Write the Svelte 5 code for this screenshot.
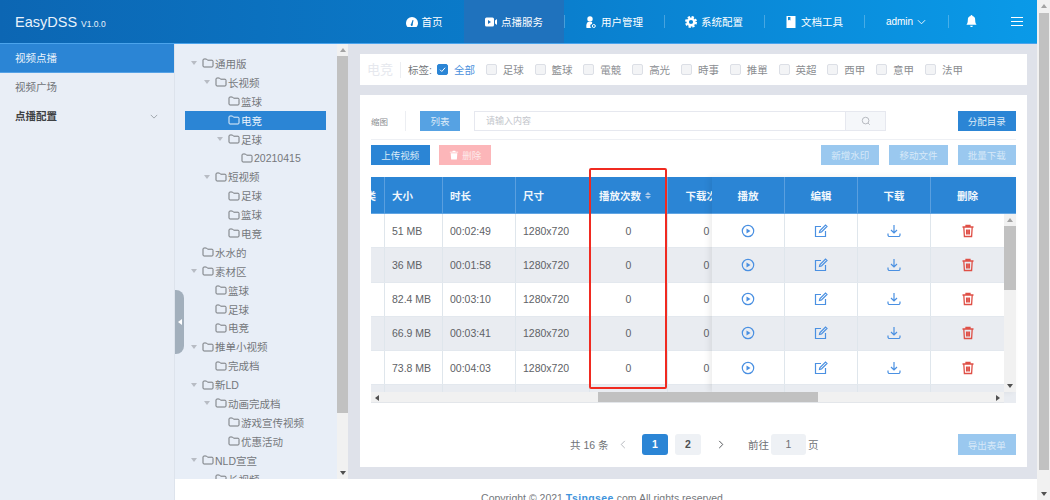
<script lang="ts">
  const nav = [
    { label: '首页', icon: 'home', home: true },
    { label: '点播服务', icon: 'video', active: true },
    { label: '用户管理', icon: 'user', split: true },
    { label: '系统配置', icon: 'gear', split: true },
    { label: '文档工具', icon: 'doc', split: true }
  ];

  const tags = ['足球', '籃球', '電競', '高光', '時事', '推單', '英超', '西甲', '意甲', '法甲'];

  const tree = [
    { name: '通用版', level: 0, open: true },
    { name: '长视频', level: 1, open: true },
    { name: '篮球', level: 2 },
    { name: '电竞', level: 2, selected: true },
    { name: '足球', level: 2, open: true },
    { name: '20210415', level: 3 },
    { name: '短视频', level: 1, open: true },
    { name: '足球', level: 2 },
    { name: '篮球', level: 2 },
    { name: '电竞', level: 2 },
    { name: '水水的', level: 0 },
    { name: '素材区', level: 0, open: true },
    { name: '篮球', level: 1 },
    { name: '足球', level: 1 },
    { name: '电竞', level: 1 },
    { name: '推单小视频', level: 0, open: true },
    { name: '完成档', level: 1 },
    { name: '新LD', level: 0, open: true },
    { name: '动画完成档', level: 1, open: true },
    { name: '游戏宣传视频', level: 2 },
    { name: '优惠活动', level: 2 },
    { name: 'NLD宣宣', level: 0, open: true },
    { name: '长视频', level: 1 }
  ];

  const rows = [
    { size: '51 MB', time: '00:02:49' },
    { size: '36 MB', time: '00:01:58' },
    { size: '82.4 MB', time: '00:03:10' },
    { size: '66.9 MB', time: '00:03:41' },
    { size: '73.8 MB', time: '00:04:03' },
    { size: '', time: '' }
  ];
</script>

<div class="page">
  <div class="shell">
    <header class="topbar">
      <div class="brand">EasyDSS <small>V1.0.0</small></div>
      <nav class="nav">
        {#each nav as item}
          <div class="nav-item" class:active={item.active} class:split={item.split} class:home={item.home}>
            <svg class="nav-icon" viewBox="0 0 12 12" aria-hidden="true">
              {#if item.icon === 'home'}
                <path fill="#fff" fill-rule="evenodd" d="M6 1a6 6 0 0 0-6 6c0 1.7.6 3 1.5 4h9c.9-1 1.500-2.300 1.500-4a6 6 0 0 0-6-6zM6.600 4 5.200 7.800a1.100 1.100 0 1 0 1.500.4L7.500 4.300z" />
              {:else if item.icon === 'video'}
                <path fill="#fff" fill-rule="evenodd" d="M1.500 1.500h6A1.500 1.500 0 0 1 9 3v6a1.500 1.500 0 0 1-1.500 1.500h-6A1.500 1.500 0 0 1 0 9V3a1.500 1.500 0 0 1 1.500-1.500zM3 4v4l3-2z" />
                <path fill="#fff" d="M10 4.500 12 3v6l-2-1.500z" />
              {:else if item.icon === 'user'}
                <circle cx="5" cy="3" r="2.700" fill="#fff" />
                <path fill="#fff" d="M2.800 6h4.400L7 8a2 2 0 0 0 .5 4H1.500C1 9.500 1.500 7 2.800 6z" />
                <circle cx="8.800" cy="10" r="1.500" fill="none" stroke="#fff" />
              {:else if item.icon === 'gear'}
                <circle cx="6" cy="6" r="3.300" fill="none" stroke="#fff" stroke-width="2.400" />
                <circle cx="6" cy="6" r="5" fill="none" stroke="#fff" stroke-width="2" stroke-dasharray="2.300 1.630" />
              {:else}
                <path fill="#fff" fill-rule="evenodd" d="M1.500 0h9v12h-9zM3 1v3.500l1.200-.8 1.200.8V1z" />
              {/if}
            </svg>
            <span>{item.label}</span>
          </div>
        {/each}
        <div class="nav-item split admin">
          <span>admin</span>
          <svg class="chevron" viewBox="0 0 10 6" aria-hidden="true"><path d="M1 1l4 4 4-4" /></svg>
        </div>
        <div class="nav-item split bell">
          <svg class="bell-icon" viewBox="0 0 12 14" aria-hidden="true">
            <path fill="#fff" d="M6 0a1 1 0 0 1 1 1.100A4 4 0 0 1 10 5c0 3 .6 4.500 1.600 5.500H.4C1.400 9.500 2 8 2 5a4 4 0 0 1 3-3.900A1 1 0 0 1 6 0zM4.500 11.500h3a1.500 1.500 0 0 1-3 0z" />
          </svg>
        </div>
        <div class="nav-item burger">
          <span></span><span></span><span></span>
        </div>
      </nav>
    </header>

    <div class="columns">
      <aside class="sidebar">
        <div class="side-item current">视频点播</div>
        <div class="side-item">视频广场</div>
        <div class="side-item group">
          点播配置
          <svg class="side-chevron" viewBox="0 0 10 6" aria-hidden="true"><path d="M1 1l4 4 4-4" /></svg>
        </div>
      </aside>

      <div class="workspace">
        <div class="panels">
          <section class="tree">
            <div class="tree-list">
              {#each tree as node}
                <div class="tree-row" class:selected={node.selected} style="padding-left: {node.level * 13}px">
                  <span class="caret-box">{#if node.open}<i class="caret"></i>{/if}</span>
                  <svg class="folder" viewBox="0 0 12 10" aria-hidden="true">
                    <path d="M1 8V2a1 1 0 0 1 1-1h2.500l1 1.200H10a1 1 0 0 1 1 1V8a1 1 0 0 1-1 1H2a1 1 0 0 1-1-1z" />
                  </svg>
                  <span class="tree-name">{node.name}</span>
                </div>
              {/each}
            </div>
            <div class="tree-scroll">
              <i class="arrow up"></i>
              <div class="tree-thumb"></div>
              <i class="arrow down bottom"></i>
            </div>
            <div class="collapse"><i></i></div>
          </section>

          <main class="main">
            <div class="filter">
              <span class="filter-title">电竞</span>
              <span class="filter-label">标签:</span>
              <label class="tag on">
                <span class="box"><svg viewBox="0 0 9 9" aria-hidden="true"><path d="M2 4.700l1.800 1.800 3.300-3.800" /></svg></span>
                全部
              </label>
              {#each tags as tag}
                <label class="tag"><span class="box"></span>{tag}</label>
              {/each}
            </div>

            <div class="card">
              <div class="toolbar first">
                <span class="view-text">缩图</span>
                <span class="view-sep"></span>
                <button class="btn list">列表</button>
                <div class="search">
                  <span class="search-input">请输入内容</span>
                  <span class="search-btn">
                    <svg viewBox="0 0 12 12" aria-hidden="true"><circle cx="5.500" cy="5.500" r="4" /><path d="M8.500 8.500l2 2" /></svg>
                  </span>
                </div>
                <button class="btn primary push">分配目录</button>
              </div>

              <div class="toolbar second">
                <button class="btn primary">上传视频</button>
                <button class="btn danger">
                  <svg viewBox="0 0 12 12" aria-hidden="true"><path fill="#fff" d="M4.500 1h3l.5 1h3v1H1V2h3zM2 4h8l-.6 7.500H2.600z" /></svg>
                  删除
                </button>
                <button class="btn pale push">新增水印</button>
                <button class="btn pale">移动文件</button>
                <button class="btn pale">批量下载</button>
              </div>

              <div class="table">
                <div class="table-body">
                  <div class="scroll-part">
                    <div class="t-row head">
                      <div class="c c0 clipped">类</div>
                      <div class="c c1">大小</div>
                      <div class="c c2">时长</div>
                      <div class="c c3">尺寸</div>
                      <div class="c c4">播放次数 <span class="sort"><i></i><i></i></span></div>
                      <div class="c c4 mid">下载次数</div>
                    </div>
                    <div class="rows">
                      {#each rows as row, i}
                        <div class="t-row" class:even={i % 2 === 1}>
                          <div class="c c0"></div>
                          <div class="c c1">{row.size}</div>
                          <div class="c c2">{row.time}</div>
                          <div class="c c3">{row.size ? '1280x720' : ''}</div>
                          <div class="c c4 mid">{row.size ? '0' : ''}</div>
                          <div class="c c4 mid">{row.size ? '0' : ''}</div>
                        </div>
                      {/each}
                    </div>
                  </div>

                  <div class="fixed-part">
                    <div class="t-row head">
                      <div class="c a2 mid">播放</div>
                      <div class="c a2 mid">编辑</div>
                      <div class="c a2 mid">下载</div>
                      <div class="c a2 mid last">删除</div>
                    </div>
                    <div class="fixed-body">
                      <div class="rows">
                        {#each rows as row, i}
                          <div class="t-row" class:even={i % 2 === 1}>
                            <div class="c a2 mid">
                              {#if row.size}
                                <svg class="act blue" viewBox="0 0 14 14" aria-hidden="true"><circle cx="7" cy="7" r="5.700" /><path class="solid" d="M5.500 4.500 9.500 7l-4 2.500z" /></svg>
                              {/if}
                            </div>
                            <div class="c a2 mid">
                              {#if row.size}
                                <svg class="act blue" viewBox="0 0 14 14" aria-hidden="true"><path d="M7 2.500H1.500v10h10V7" /><path d="M5.500 8.500l.5-2L11.500 1l1.500 1.500L7.500 8z" /></svg>
                              {/if}
                            </div>
                            <div class="c a2 mid">
                              {#if row.size}
                                <svg class="act blue" viewBox="0 0 14 14" aria-hidden="true"><path d="M7 1v7.500M4 6l3 3 3-3" /><path d="M1 9.500v1.500a1.500 1.500 0 0 0 1.500 1.500h9A1.500 1.500 0 0 0 13 11V9.500" /></svg>
                              {/if}
                            </div>
                            <div class="c a2 mid last">
                              {#if row.size}
                                <svg class="act red" viewBox="0 0 14 14" aria-hidden="true"><path d="M1.500 3h11M5 3V1.500h4V3M2.800 3l.6 9.500h7.200l.6-9.500M5.600 5.500v5M8.400 5.500v5M7 5.500v5" /></svg>
                              {/if}
                            </div>
                          </div>
                        {/each}
                      </div>
                      <div class="v-scroll">
                        <i class="arrow up"></i>
                        <div class="v-thumb"></div>
                        <i class="arrow down bottom"></i>
                      </div>
                    </div>
                  </div>
                </div>

                <div class="h-scroll">
                  <div class="h-track">
                    <i class="arrow left"></i>
                    <div class="h-thumb"></div>
                    <i class="arrow right"></i>
                  </div>
                  <div class="h-corner"></div>
                </div>
              </div>

              <div class="pager">
                <span class="total">共 16 条</span>
                <svg class="pg-arrow light" viewBox="0 0 6 10" aria-hidden="true"><path d="M5 1 1 5l4 4" /></svg>
                <span class="pg current">1</span>
                <span class="pg">2</span>
                <svg class="pg-arrow" viewBox="0 0 6 10" aria-hidden="true"><path d="M1 1l4 4-4 4" /></svg>
                <span class="goto">前往</span>
                <span class="pg-input">1</span>
                <span class="page-word">页</span>
                <button class="btn pale export">导出表单</button>
              </div>
            </div>
          </main>
        </div>

        <footer class="footer">Copyright © 2021 <b>Tsingsee</b>.com All rights reserved</footer>
      </div>
    </div>
  </div>

  <div class="page-scroll">
    <i class="arrow up"></i>
    <div class="page-thumb"></div>
    <i class="arrow down bottom"></i>
  </div>

  <div class="highlight"></div>
</div>

<style>
  :global(body) {
    margin: 0;
    overflow: hidden;
  }

  .page {
    position: relative;
    display: flex;
    width: 1050px;
    height: 500px;
    overflow: hidden;
    font-family: "Liberation Sans", "Noto Sans CJK SC", sans-serif;
    font-size: 10.5px;
    color: #606266;
    background: #fff;
  }

  .shell {
    display: flex;
    flex-direction: column;
    width: 1037px;
    flex: none;
  }

  /* top bar */
  .topbar {
    display: flex;
    align-items: stretch;
    height: 43px;
    flex: none;
    color: #fff;
    border-bottom: 1px solid #4ba4ec;
    background: linear-gradient(90deg, #0c66b3 0%, #0a7ccb 50%, #0a9ae8 100%);
  }

  .brand {
    width: 364px;
    padding-left: 15px;
    box-sizing: border-box;
    font-size: 14.5px;
    line-height: 44px;
    color: #e8f2fb;
  }

  .brand small {
    font-size: 8.5px;
  }

  .nav {
    display: flex;
    flex: 1;
  }

  .nav-item {
    position: relative;
    display: flex;
    align-items: center;
    justify-content: center;
    gap: 4px;
    width: 100px;
  }

  .nav-item.home {
    padding-left: 20px;
    box-sizing: border-box;
  }

  .nav-item.active {
    background: #1f72bd;
  }

  .nav-item.split::before {
    content: "";
    position: absolute;
    left: 0;
    top: 15px;
    height: 13px;
    width: 1px;
    background: rgba(255, 255, 255, 0.25);
  }

  .nav-icon {
    width: 12px;
    height: 12px;
  }

  .bell-icon {
    width: 11px;
    height: 13px;
  }

  .admin {
    width: 84px;
    font-size: 10px;
  }

  .chevron {
    width: 9px;
    height: 6px;
    fill: none;
    stroke: #fff;
    stroke-width: 1;
  }

  .bell {
    width: 47px;
  }

  .burger {
    width: 42px;
    flex-direction: column;
    gap: 3px;
    padding-left: 2px;
    box-sizing: border-box;
  }

  .burger span {
    display: block;
    width: 12px;
    height: 1px;
    background: #fff;
  }

  /* columns */
  .columns {
    display: flex;
    flex: 1;
    min-height: 0;
  }

  .sidebar {
    width: 175px;
    flex: none;
    box-sizing: border-box;
    background: #e9eef6;
    border-right: 1px solid #dde3ec;
  }

  .side-item {
    position: relative;
    height: 29px;
    padding-left: 15px;
    line-height: 29px;
    font-size: 10.5px;
    color: #6f7276;
  }

  .side-item.current {
    color: #eaf3fb;
    background: #2b85d5;
    border-bottom: 1px solid #56a2e6;
    height: 28px;
    line-height: 28px;
  }

  .side-item.group {
    font-weight: bold;
    color: #3e4144;
  }

  .side-chevron {
    position: absolute;
    right: 16px;
    top: 12px;
    width: 8px;
    height: 5px;
    fill: none;
    stroke: #8f959c;
    stroke-width: 1;
  }

  .workspace {
    display: flex;
    flex-direction: column;
    flex: 1;
    min-width: 0;
  }

  .panels {
    display: flex;
    height: 435px;
    flex: none;
  }

  /* tree */
  .tree {
    position: relative;
    display: flex;
    width: 173px;
    flex: none;
    background: #e8eef7;
  }

  .tree-list {
    flex: 1;
    min-width: 0;
    padding: 10px 11px 0 10px;
    overflow: hidden;
  }

  .tree-row {
    display: flex;
    align-items: center;
    height: 18.9px;
    white-space: nowrap;
    color: #75787c;
  }

  .tree-row.selected {
    color: #eaf3fb;
    background: #2b85d5;
  }

  .caret-box {
    display: flex;
    justify-content: center;
    width: 17px;
    flex: none;
  }

  .caret {
    width: 0;
    height: 0;
    border-left: 3px solid transparent;
    border-right: 3px solid transparent;
    border-top: 4px solid #b8bcc4;
  }

  .folder {
    width: 12px;
    height: 10px;
    margin-right: 1px;
    flex: none;
    fill: none;
    stroke: currentColor;
    stroke-width: 1;
  }

  .tree-scroll {
    position: relative;
    width: 11px;
    flex: none;
    background: #f1f1f1;
  }

  .tree-thumb {
    height: 357px;
    margin-top: 12px;
    background: #c1c1c1;
  }

  .collapse {
    position: absolute;
    left: 0;
    top: 246px;
    display: flex;
    align-items: center;
    justify-content: center;
    width: 9px;
    height: 64px;
    border-radius: 0 8px 8px 0;
    background: #a2afbc;
  }

  .collapse i {
    width: 0;
    height: 0;
    border-top: 3px solid transparent;
    border-bottom: 3px solid transparent;
    border-right: 4px solid #fff;
  }

  /* scrollbar arrows */
  .arrow {
    position: absolute;
    width: 0;
    height: 0;
  }

  .arrow.up {
    top: 4px;
    left: calc(50% - 3px);
    border-left: 3px solid transparent;
    border-right: 3px solid transparent;
    border-bottom: 4px solid #a3a3a3;
  }

  .arrow.down {
    left: calc(50% - 3px);
    border-left: 3px solid transparent;
    border-right: 3px solid transparent;
    border-top: 4px solid #505050;
  }

  .arrow.bottom {
    bottom: 4px;
  }

  .arrow.left {
    top: 3px;
    left: 4px;
    border-top: 3px solid transparent;
    border-bottom: 3px solid transparent;
    border-right: 4px solid #505050;
  }

  .arrow.right {
    top: 3px;
    right: 4px;
    border-top: 3px solid transparent;
    border-bottom: 3px solid transparent;
    border-left: 4px solid #505050;
  }

  .main {
    flex: 1;
    min-width: 0;
    padding: 10px 10px 12px 12px;
    box-sizing: border-box;
    background: #dfe2ea;
  }

  /* filter */
  .filter {
    display: flex;
    align-items: center;
    height: 31px;
    padding-left: 7px;
    background: #fff;
  }

  .filter-title {
    font-size: 13px;
    color: #e6e8ee;
    padding-right: 7px;
    margin-right: 7px;
    border-right: 1px solid #eceef2;
    line-height: 16px;
  }

  .filter-label {
    margin-right: 5px;
    color: #74777b;
  }

  .tag {
    display: flex;
    align-items: center;
    gap: 6px;
    margin-right: 10.8px;
    color: #8a8d91;
  }

  .tag.on {
    color: #4a90dc;
  }

  .box {
    width: 9px;
    height: 9px;
    border: 1px solid #dcdfe6;
    border-radius: 2px;
    background: #f3f4f6;
    flex: none;
  }

  .tag.on .box {
    border-color: #2b85d5;
    background: #2b85d5;
  }

  .box svg {
    display: block;
    width: 9px;
    height: 9px;
    fill: none;
    stroke: #fff;
    stroke-width: 1;
  }

  /* card */
  .card {
    height: 372px;
    margin-top: 10px;
    padding: 16px 11px 0;
    box-sizing: border-box;
    background: #fff;
  }

  .toolbar {
    display: flex;
    align-items: center;
  }

  .toolbar.first {
    height: 20px;
    padding-bottom: 8px;
    border-bottom: 1px solid #eef0f4;
  }

  .toolbar.second {
    height: 20px;
    margin-top: 5px;
    gap: 9.8px;
  }

  .btn {
    display: inline-flex;
    align-items: center;
    justify-content: center;
    gap: 3px;
    height: 20px;
    width: 58.5px;
    padding: 0;
    border: 0;
    font: inherit;
    font-size: 9.5px;
    color: #dcebf8;
  }

  .btn svg {
    width: 10px;
    height: 10px;
  }

  .btn.primary {
    background: #2b85d5;
  }

  .btn.pale {
    background: #9ac8ef;
    color: #d7e9f8;
  }

  .btn.danger {
    width: 52px;
    background: #fcb6b9;
    color: #fde9ea;
  }

  .btn.list {
    width: 40px;
    background: #56a2e3;
    color: #dcebf8;
    margin-left: 14px;
  }

  .push {
    margin-left: auto;
  }

  .view-text {
    font-size: 8.5px;
    color: #8a8d91;
    width: 34px;
  }

  .view-sep {
    width: 1px;
    height: 20px;
    background: #eceef2;
  }

  .search {
    display: flex;
    width: 412px;
    height: 20px;
    margin-left: 14px;
    box-sizing: border-box;
    border: 1px solid #e6e8ef;
  }

  .search-input {
    flex: 1;
    padding-left: 11px;
    line-height: 18px;
    font-size: 9px;
    color: #c3c6cc;
  }

  .search-btn {
    display: flex;
    align-items: center;
    justify-content: center;
    width: 39px;
    border-left: 1px solid #e6e8ef;
    background: #f5f7fa;
  }

  .search-btn svg {
    width: 10px;
    height: 10px;
    fill: none;
    stroke: #a9adb4;
    stroke-width: 1;
  }

  /* table */
  .table {
    margin-top: 12px;
  }

  .table-body {
    display: flex;
    height: 215px;
  }

  .scroll-part {
    width: 341px;
    flex: none;
    overflow: hidden;
  }

  .fixed-part {
    position: relative;
    width: 304px;
    flex: none;
    box-shadow: -3px 0 6px rgba(0, 0, 0, 0.07);
  }

  .t-row {
    display: flex;
    height: 34.25px;
    box-sizing: border-box;
    background: #fff;
    border-bottom: 1px solid #e3e8ee;
  }

  .t-row.even {
    background: #e9ecf1;
  }

  .t-row.head {
    height: 37px;
    border-bottom: 1px solid #61a5e3;
    background: #2b85d5;
    color: #f1f7fc;
    font-weight: bold;
    font-size: 10.5px;
  }

  .rows {
    flex: 1;
    min-width: 0;
  }

  .c {
    display: flex;
    align-items: center;
    flex: none;
    box-sizing: border-box;
    padding-left: 7px;
    white-space: nowrap;
    overflow: hidden;
    border-right: 1px solid #dfe6ec;
  }

  .head .c {
    border-right-color: #5a9fdf;
  }

  .c.last {
    border-right: 0;
  }

  .mid {
    justify-content: center;
    padding-left: 0;
  }

  .c0 { width: 14px; }
  .c1 { width: 58px; }
  .c2 { width: 73px; }
  .c3 { width: 74px; }
  .c4 { width: 78px; }
  .a2 { width: 73px; }

  .c0.clipped {
    padding: 0 8px 0 0;
    justify-content: flex-end;
  }

  .head .c4:not(.mid) {
    padding-left: 9px;
    gap: 4px;
  }

  .sort {
    display: inline-flex;
    flex-direction: column;
    gap: 1px;
  }

  .sort i {
    width: 0;
    height: 0;
    border-left: 3.5px solid transparent;
    border-right: 3.5px solid transparent;
    border-bottom: 3.5px solid #a9c9ea;
  }

  .sort i + i {
    border-bottom: 0;
    border-top: 3.5px solid #a9c9ea;
  }

  .fixed-body {
    display: flex;
    height: 178px;
    overflow: hidden;
  }

  .act {
    width: 14px;
    height: 14px;
    fill: none;
    stroke-width: 1.2;
  }

  .act.blue { stroke: #4a90e2; }
  .act.red { stroke: #df4f46; stroke-width: 1.3; }
  .act .solid { fill: #4a90e2; stroke: none; }

  .v-scroll {
    position: relative;
    width: 12px;
    flex: none;
    background: #f1f1f1;
  }

  .v-thumb {
    height: 64px;
    margin-top: 12px;
    background: #c1c1c1;
  }

  .h-scroll {
    display: flex;
    height: 11px;
  }

  .h-track {
    position: relative;
    width: 633px;
    flex: none;
    background: #f1f1f1;
    border-bottom: 1px solid #e3e6ea;
    box-sizing: border-box;
  }

  .h-thumb {
    width: 220px;
    height: 100%;
    margin-left: 227px;
    background: #c1c1c1;
  }

  .h-corner {
    flex: 1;
    background: #e9ecf1;
  }

  /* pager */
  .pager {
    display: flex;
    align-items: center;
    height: 21px;
    margin-top: 31px;
    padding-left: 199px;
    color: #6f7276;
  }

  .total {
    width: 50px;
  }

  .pg-arrow {
    width: 6px;
    height: 9px;
    flex: none;
    fill: none;
    stroke: #55585c;
    stroke-width: 1.1;
  }

  .pg-arrow.light {
    stroke: #b5b8bd;
    margin-right: 16px;
  }

  .pg {
    width: 26px;
    height: 21px;
    margin-right: 7px;
    border-radius: 3px;
    background: #eef1f5;
    font-weight: bold;
    line-height: 21px;
    text-align: center;
    color: #4b4e52;
  }

  .pg.current {
    background: #2b85d5;
    color: #fff;
  }

  .pg + .pg-arrow {
    margin-left: 10px;
    margin-right: 24px;
  }

  .goto {
    margin-right: 2px;
  }

  .pg-input {
    width: 35px;
    height: 21px;
    border-radius: 3px;
    background: #eef1f5;
    line-height: 21px;
    text-align: center;
  }

  .page-word {
    margin-left: 2px;
  }

  .btn.export {
    margin-left: auto;
    height: 21px;
  }

  .footer {
    flex: 1;
    padding: 13px 8px 0 0;
    box-sizing: border-box;
    background: #fff;
    text-align: center;
    font-size: 10.5px;
    line-height: 12px;
    overflow: hidden;
    color: #75787c;
  }

  .footer b {
    color: #3f94dc;
    letter-spacing: 0.4px;
  }

  /* browser scrollbar on the right */
  .page-scroll {
    position: relative;
    flex: 1;
    background: #f1f1f1;
  }

  .page-thumb {
    width: 10px;
    height: 457px;
    margin: 13px 0 0 2px;
    background: #c1c1c1;
  }

  /* red marker drawn over the column */
  .highlight {
    position: absolute;
    left: 589px;
    top: 168px;
    width: 78px;
    height: 221px;
    box-sizing: border-box;
    border: 2px solid #f02a20;
    border-radius: 2px;
    pointer-events: none;
  }
</style>
